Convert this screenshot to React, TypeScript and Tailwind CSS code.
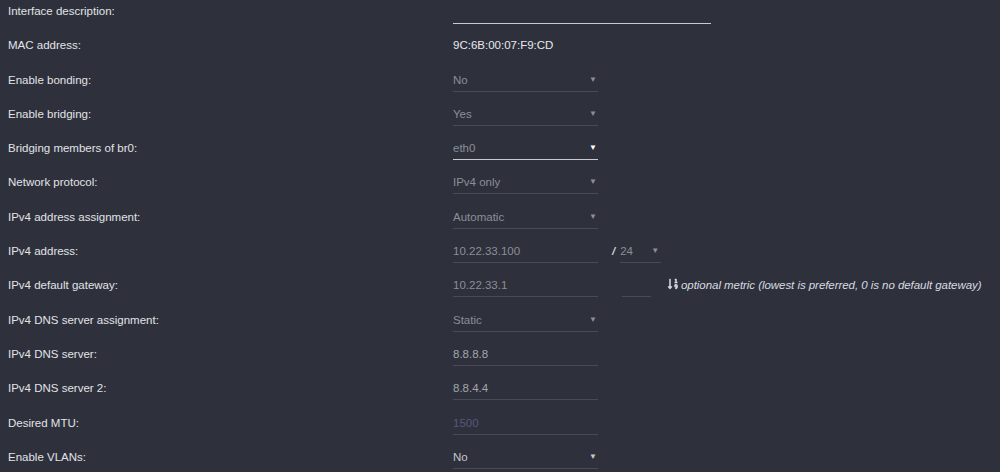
import { FaSortNumericDown } from "react-icons/fa";

type Field =
  | { kind: "text"; value: string; tone?: "muted" | "placeholder" }
  | { kind: "select"; value: string; active?: boolean; bright?: boolean }
  | { kind: "static"; value: string }
  | { kind: "desc" };

const rows: { label: string; field: Field; extra?: "mask" | "metric" }[] = [
  { label: "Interface description:", field: { kind: "desc" } },
  { label: "MAC address:", field: { kind: "static", value: "9C:6B:00:07:F9:CD" } },
  { label: "Enable bonding:", field: { kind: "select", value: "No" } },
  { label: "Enable bridging:", field: { kind: "select", value: "Yes" } },
  { label: "Bridging members of br0:", field: { kind: "select", value: "eth0", active: true } },
  { label: "Network protocol:", field: { kind: "select", value: "IPv4 only" } },
  { label: "IPv4 address assignment:", field: { kind: "select", value: "Automatic" } },
  { label: "IPv4 address:", field: { kind: "text", value: "10.22.33.100", tone: "muted" }, extra: "mask" },
  { label: "IPv4 default gateway:", field: { kind: "text", value: "10.22.33.1", tone: "muted" }, extra: "metric" },
  { label: "IPv4 DNS server assignment:", field: { kind: "select", value: "Static" } },
  { label: "IPv4 DNS server:", field: { kind: "text", value: "8.8.8.8" } },
  { label: "IPv4 DNS server 2:", field: { kind: "text", value: "8.8.4.4" } },
  { label: "Desired MTU:", field: { kind: "text", value: "1500", tone: "placeholder" } },
  { label: "Enable VLANs:", field: { kind: "select", value: "No", bright: true } },
];

const Arrow = ({ className }: { className: string }) => (
  <span className={`text-[8px] leading-none ${className}`}>▼</span>
);

const FieldView = ({ field }: { field: Field }) => {
  if (field.kind === "desc") {
    return <div className="w-[258px] h-[24px] border-b border-[#c9cbd1]" />;
  }
  if (field.kind === "static") {
    return <div className="h-[24px] pt-[3px] text-[#e8e9ec]">{field.value}</div>;
  }
  if (field.kind === "select") {
    const line = field.active ? "border-[#c9cbd1]" : "border-[#474b57]";
    const text = field.bright ? "text-[#c4c6cc]" : "text-[#8b8e97]";
    const arrow = field.active ? "text-white" : field.bright ? "text-[#c4c6cc]" : "text-[#8b8e97]";
    return (
      <div className={`w-[145px] h-[23px] pt-[3px] flex justify-between items-start border-b ${line}`}>
        <span className={text}>{field.value}</span>
        <Arrow className={`mt-[4px] mr-[1px] ${arrow}`} />
      </div>
    );
  }
  const tone =
    field.tone === "placeholder"
      ? "text-[#55587f]"
      : field.tone === "muted"
        ? "text-[#8b8e97]"
        : "text-[#a3a6ad]";
  return (
    <div className={`w-[145px] h-[23px] pt-[3px] border-b border-[#474b57] ${tone}`}>{field.value}</div>
  );
};

export default function App() {
  return (
    <div
      className="w-[1000px] h-[472px] overflow-hidden bg-[#2e313c] text-[11.5px] text-[#e1e3e7]"
      style={{ fontFamily: '"Liberation Sans", Arial, sans-serif' }}
    >
      {rows.map((row) => (
        <div key={row.label} className="flex h-[34.3px]">
          <div className="w-[453px] pl-[8px] pt-[3px]">{row.label}</div>
          <FieldView field={row.field} />
          {row.extra === "mask" && (
            <div className="flex ml-[14px] pt-[3px]">
              <span className="text-[#c9cbd1] italic font-bold mr-[5px]">/</span>
              <div className="w-[41px] h-[20px] flex justify-between border-b border-[#474b57] text-[#8b8e97]">
                <span>24</span>
                <Arrow className="mt-[4px] mr-[2px] text-[#8b8e97]" />
              </div>
            </div>
          )}
          {row.extra === "metric" && (
            <div className="flex ml-[24px]">
              <div className="w-[29px] h-[23px] border-b border-[#474b57]" />
              <div className="flex items-start pt-[3px] ml-[16px] italic text-[#d9dbe0]">
                <FaSortNumericDown className="w-[12px] h-[12px] mr-[2px] mt-[1px] text-[#d9dbe0]" />
                <span className="tracking-[-0.05px]">
                  optional metric (lowest is preferred, 0 is no default gateway)
                </span>
              </div>
            </div>
          )}
        </div>
      ))}
    </div>
  );
}
